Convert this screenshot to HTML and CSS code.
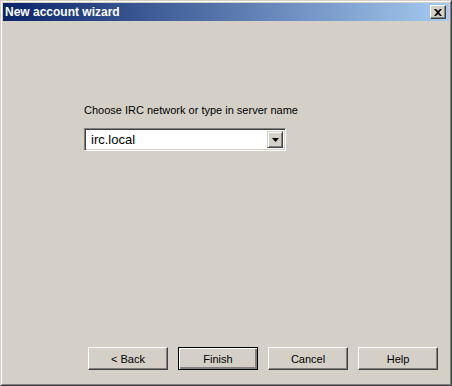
FILE: index.html
```html
<!DOCTYPE html>
<html lang="en">
<head>
  <meta charset="UTF-8" />
  <title>New account wizard</title>
  <link rel="stylesheet" href="styles.css">
</head>
<body>
  <div class="window">
    <div class="frame">
      <div class="titlebar">
        <span class="title">New account wizard</span>
        <span class="close-btn">
          <svg width="8" height="7" viewBox="0 0 8 7">
            <path d="M0 0h2l2 2 2-2h2L5 3.5 8 7H6L4 5 2 7H0l3-3.5z" fill="#000"/>
          </svg>
        </span>
      </div>

      <div class="client">
        <div class="page">
          <p class="label">Choose IRC network or type in server name</p>
          <div class="combo">
            <span class="combo-text">irc.local</span>
            <span class="combo-btn">
              <svg width="7" height="4" viewBox="0 0 7 4"><path d="M0 0h7L3.5 4z" fill="#000"/></svg>
            </span>
          </div>
        </div>

        <div class="buttons">
          <button class="btn">&lt; Back</button>
          <button class="btn default">Finish</button>
          <button class="btn">Cancel</button>
          <button class="btn">Help</button>
        </div>
      </div>
    </div>
  </div>
</body>
</html>
```

FILE: styles.css
```css
body {
  margin: 0;
  font-family: 'Liberation Sans', Arial, sans-serif;
  font-size: 11px;
  background: #d4d0c8;
}

.window {
  width: 452px;
  height: 386px;
  box-sizing: border-box;
  border: 1px solid;
  border-color: #d4d0c8 #404040 #404040 #d4d0c8;
  background: #d4d0c8;
}

.frame {
  height: 100%;
  box-sizing: border-box;
  border: 1px solid;
  border-color: #ffffff #808080 #808080 #ffffff;
  padding: 1px;
  display: flex;
  flex-direction: column;
}

.titlebar {
  height: 18px;
  background: linear-gradient(to right, #0a246a, #a6caf0);
  display: flex;
  align-items: center;
  justify-content: space-between;
  padding: 0 3px 0 2px;
}

.title {
  color: #ffffff;
  font-weight: bold;
  font-size: 12px;
}

.close-btn {
  width: 16px;
  height: 14px;
  box-sizing: border-box;
  background: #d4d0c8;
  border: 1px solid;
  border-color: #ffffff #404040 #404040 #ffffff;
  box-shadow: inset -1px -1px 0 #808080;
  display: flex;
  align-items: center;
  justify-content: center;
}

.client {
  flex: 1;
  display: flex;
  flex-direction: column;
}

.page {
  flex: 1;
  padding: 83px 0 0 81px;
}

.label {
  margin: 0 0 12px;
  color: #000000;
}

.combo {
  width: 202px;
  height: 23px;
  box-sizing: border-box;
  background: #ffffff;
  border: 1px solid;
  border-color: #808080 #ffffff #ffffff #808080;
  box-shadow: inset 1px 1px 0 #404040, inset -1px -1px 0 #d4d0c8;
  display: flex;
  align-items: center;
  padding: 2px;
}

.combo-text {
  flex: 1;
  font-size: 13px;
  padding-left: 4px;
}

.combo-btn {
  width: 16px;
  height: 17px;
  box-sizing: border-box;
  background: #d4d0c8;
  border: 1px solid;
  border-color: #d4d0c8 #404040 #404040 #d4d0c8;
  box-shadow: inset 1px 1px 0 #ffffff, inset -1px -1px 0 #808080;
  display: flex;
  align-items: center;
  justify-content: center;
}

.buttons {
  display: flex;
  gap: 10px;
  padding: 0 0 13px 85px;
}

.btn {
  width: 80px;
  height: 23px;
  box-sizing: border-box;
  font-family: inherit;
  font-size: 11px;
  color: #000000;
  background: #d4d0c8;
  border: 1px solid;
  border-color: #ffffff #404040 #404040 #ffffff;
  box-shadow: inset -1px -1px 0 #808080;
  padding: 0;
}

.btn.default {
  border-color: #000000;
  box-shadow: inset 1px 1px 0 #ffffff, inset -2px -2px 0 #808080;
}
```
